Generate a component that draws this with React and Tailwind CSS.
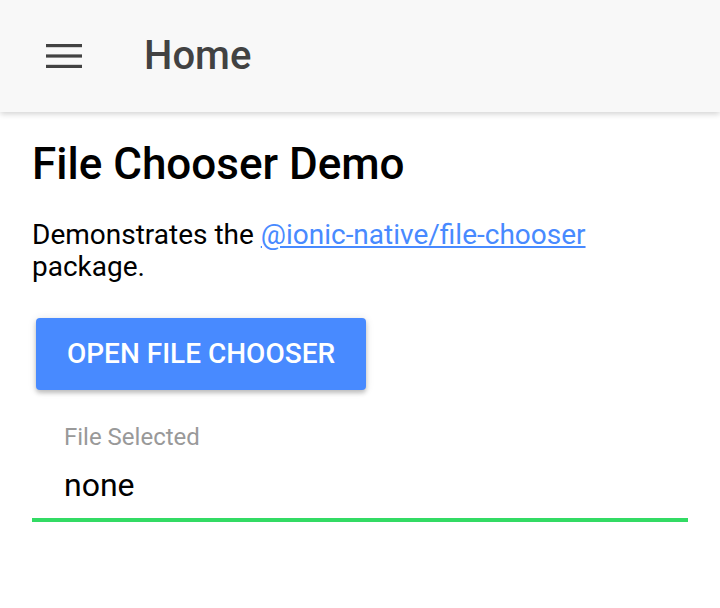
export default function App() {
	return (
		<div className="w-[720px] h-[608px] bg-white overflow-hidden font-['Roboto',sans-serif]">
			<header className="relative z-10 flex items-center h-[112px] bg-[#f8f8f8] shadow-[0_2px_6px_rgba(0,0,0,0.18)]">
				<button className="ml-[46px] w-[36px] h-[24px] flex">
					<svg width="36" height="24" viewBox="0 0 36 24">
						<rect x="0" y="0" width="36" height="3.2" fill="#424242" />
						<rect x="0" y="10.4" width="36" height="3.2" fill="#424242" />
						<rect x="0" y="20.8" width="36" height="3.2" fill="#424242" />
					</svg>
				</button>
				<div className="ml-[62px] text-[40px] leading-none font-medium text-[#424242]">
					Home
				</div>
			</header>
			<main className="px-[32px]">
				<h1 className="mt-[30px] text-[44px] leading-none font-medium text-black">
					File Chooser Demo
				</h1>
				<p className="mt-[32.5px] text-[28px] leading-[32px] text-black">
					Demonstrates the{" "}
					<a href="#" className="text-[#488aff] underline">
						@ionic-native/file-chooser
					</a>{" "}
					package.
				</p>
				<button className="mt-[35.6px] ml-[4px] w-[330px] h-[72px] rounded-[4px] bg-[#488aff] text-white text-[28px] font-medium uppercase shadow-[0_3px_4px_rgba(0,0,0,0.2),0_1px_8px_rgba(0,0,0,0.12)]">
					Open File Chooser
				</button>
				<div className="mt-[34.8px]">
					<div className="pl-[32px] text-[24px] leading-none text-[#999999]">
						File Selected
					</div>
					<div className="mt-[20.3px] pl-[32px] text-[32px] leading-none text-black">
						none
					</div>
					<div className="mt-[17px] h-[4px] bg-[#32db64]" />
				</div>
			</main>
		</div>
	);
}
